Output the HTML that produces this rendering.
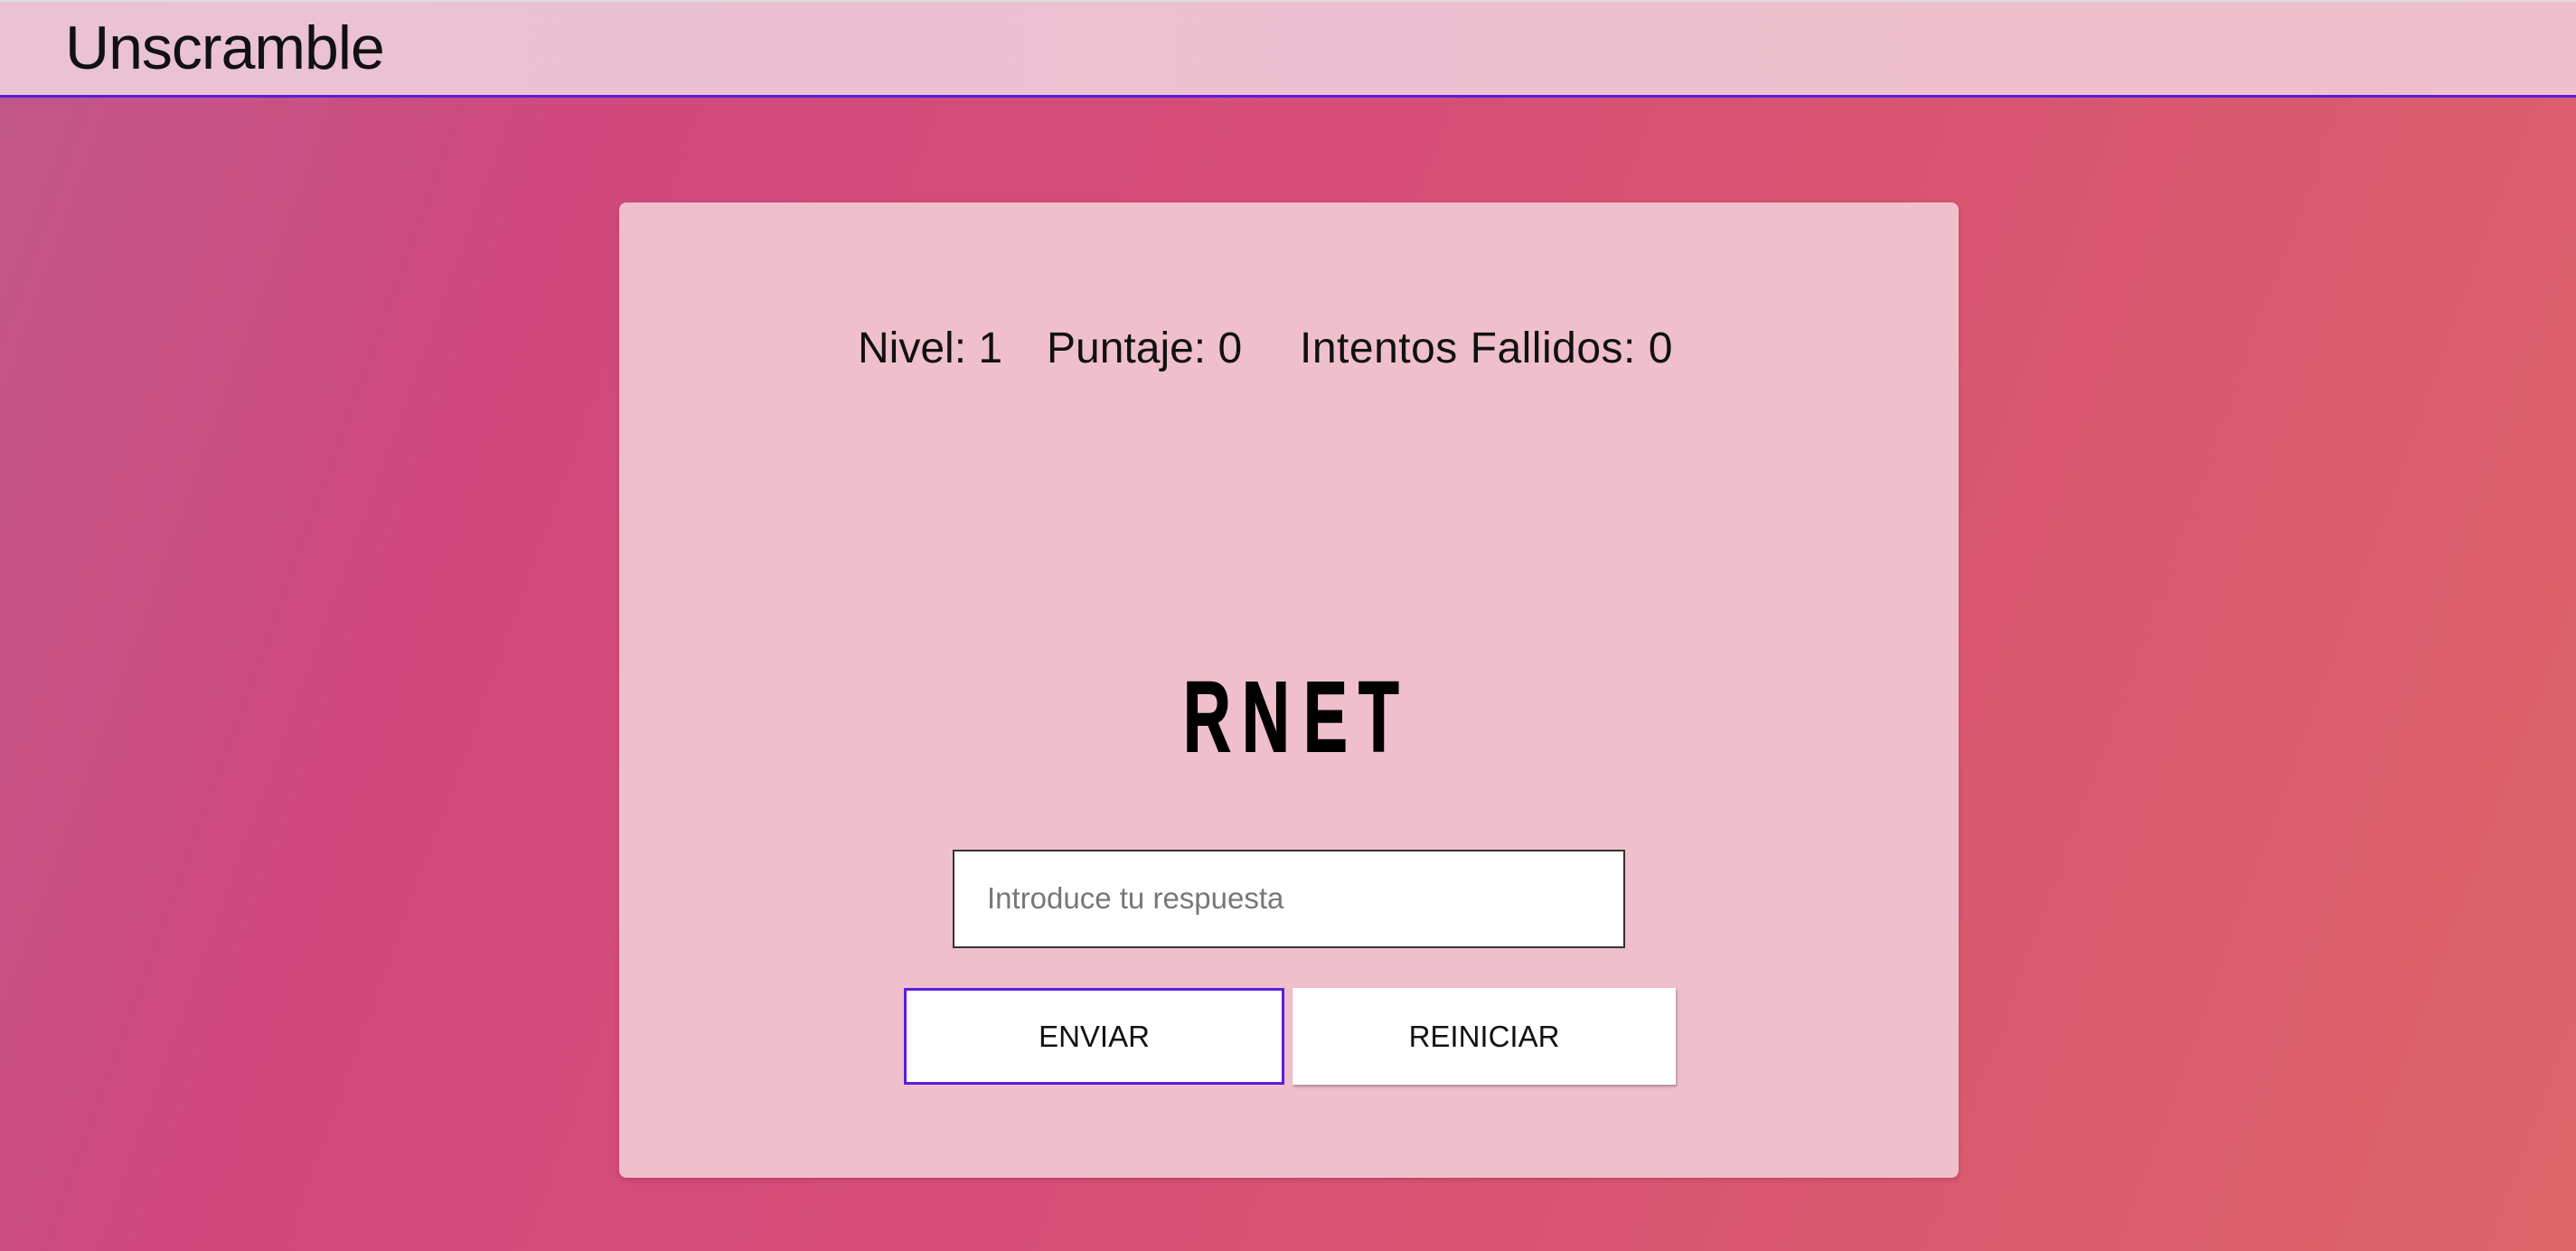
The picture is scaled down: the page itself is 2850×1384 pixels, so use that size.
<!DOCTYPE html>
<html><head><meta charset="utf-8"><style>
html,body{margin:0;padding:0;width:2850px;height:1384px;overflow:hidden;font-family:"Liberation Sans",sans-serif}
body{background:linear-gradient(110deg,#c05888 0%,#d04a7d 20%,#d64d78 45%,#d9596f 75%,#dc6468 100%);position:relative}
.hdr{position:absolute;left:0;top:0;width:2850px;background:linear-gradient(90deg,#e9c2d4,#efbfcc);border-top:2px solid #ddd;box-sizing:border-box;border-bottom:3px solid #5a1ee0;height:108px}
.hdr span{position:absolute;left:72px;top:12px;font-size:68px;color:#111;letter-spacing:-1px}
.card{position:absolute;left:685px;top:224px;width:1482px;height:1079px;background:#efbfcc;border-radius:8px;box-shadow:0 2px 6px rgba(120,30,60,.3)}
.t{position:absolute;font-size:48px;color:#111;white-space:nowrap;top:358px}
.L{position:absolute;top:738px;font-family:"Liberation Sans Narrow","Liberation Sans",sans-serif;font-weight:bold;font-size:118px;color:#000;transform:scale(0.62,0.94);transform-origin:left top;line-height:1;-webkit-text-stroke:2px #000}
.inp{position:absolute;left:1054px;top:940px;width:744px;height:109px;background:#fff;border:2px solid #333;box-sizing:border-box}
.inp span{position:absolute;left:36px;top:33px;font-size:33px;color:#777}
.btn{position:absolute;top:1093px;height:107px;background:#fff;box-sizing:border-box;font-size:33px;color:#111;text-align:center;line-height:101px}
</style></head><body>
<div class="hdr"><span>Unscramble</span></div>
<div class="card"></div>
<div class="t" style="left:949px">Nivel: 1</div>
<div class="t" style="left:1158px">Puntaje: 0</div>
<div class="t" style="left:1438px;letter-spacing:0.5px">Intentos Fallidos: 0</div>
<div class="L" style="left:1309px">R</div>
<div class="L" style="left:1374px">N</div>
<div class="L" style="left:1442px">E</div>
<div class="L" style="left:1503px">T</div>
<div class="inp"><span>Introduce tu respuesta</span></div>
<div class="btn" style="left:1000px;width:421px;border:3px solid #5a1ee0">ENVIAR</div>
<div class="btn" style="left:1430px;width:424px;line-height:107px;box-shadow:1px 2px 3px rgba(0,0,0,.3)">REINICIAR</div>
</body></html>
